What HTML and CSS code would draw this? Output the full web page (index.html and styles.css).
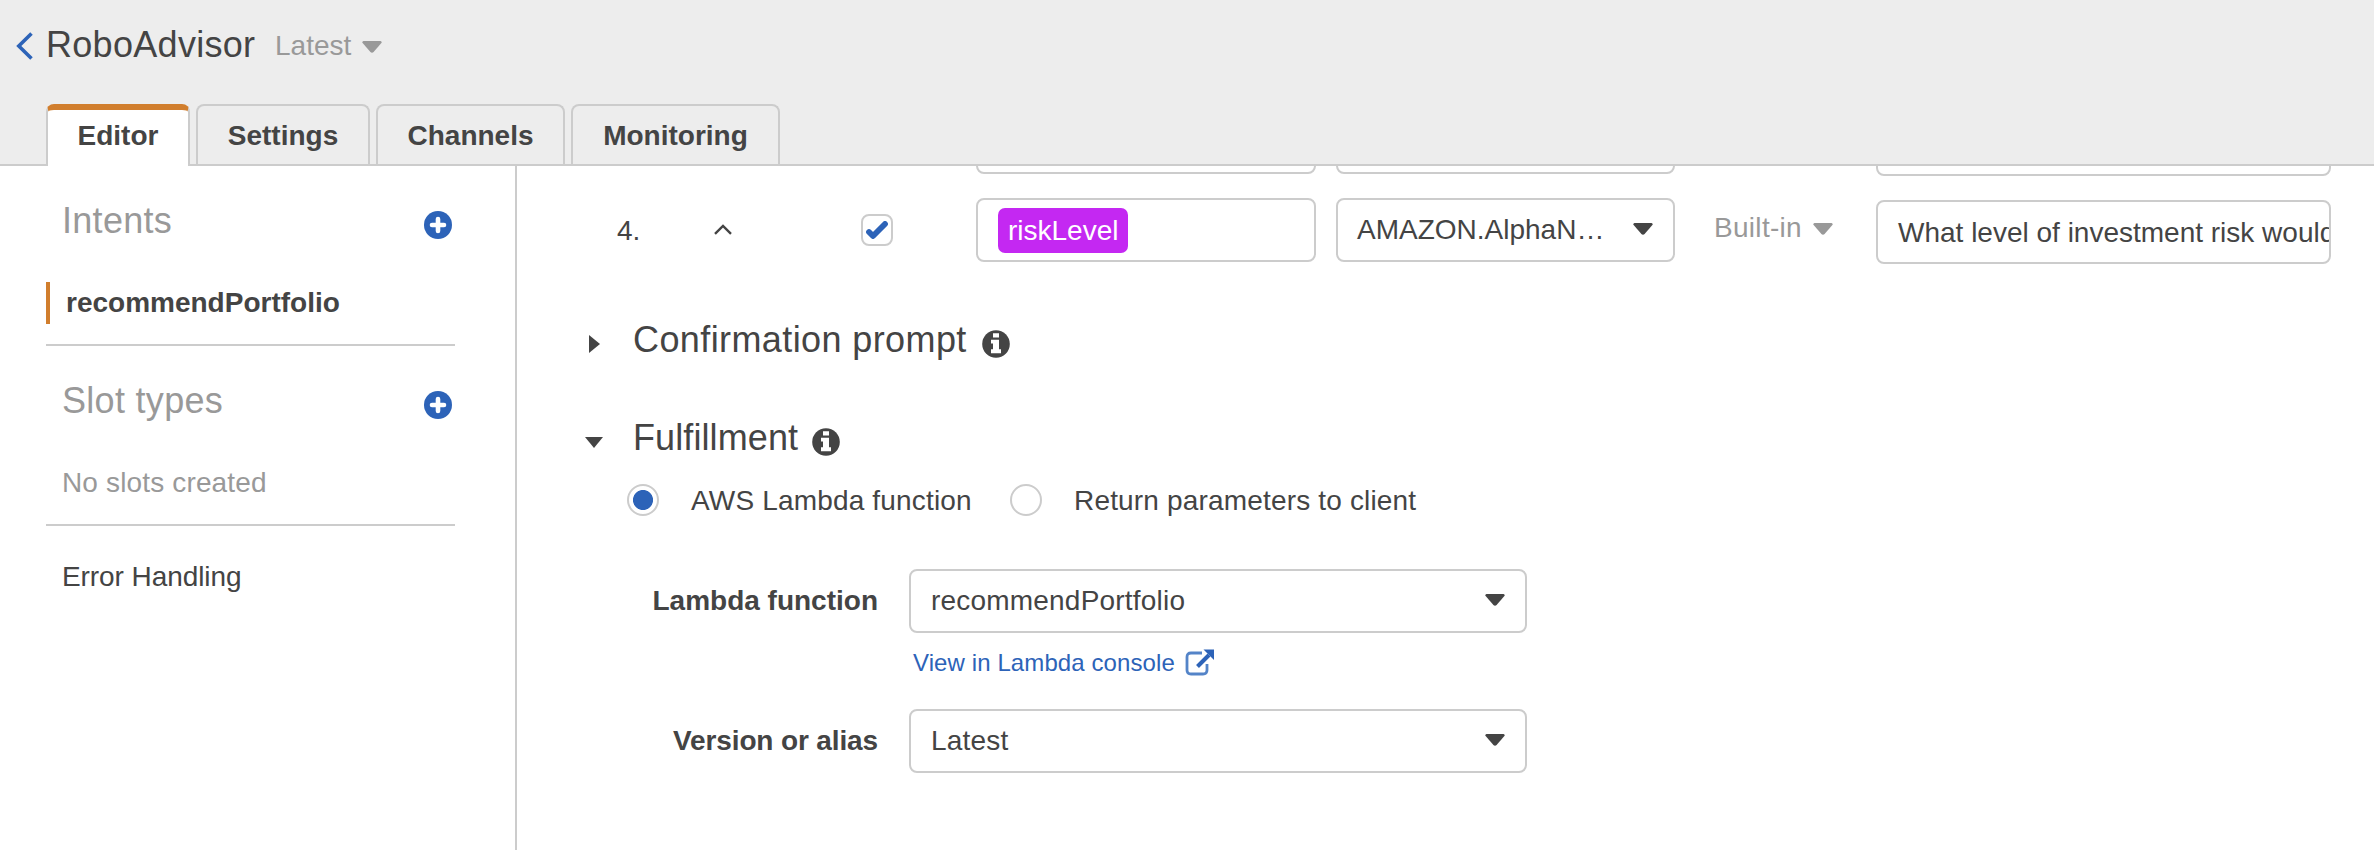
FILE: index.html
```html
<!DOCTYPE html>
<html lang="en">
<head>
<meta charset="utf-8">
<title>RoboAdvisor</title>
<link rel="stylesheet" href="styles.css">
</head>
<body>
<svg class="defs" width="0" height="0" aria-hidden="true">
  <symbol id="caret" viewBox="0 0 20 12"><path d="M1.5 0H18.5Q20 .2 19.6 1.8L11.6 11Q10 12.4 8.4 11L.4 1.8Q0 .2 1.5 0Z" fill="currentColor"/></symbol>
  <symbol id="plus" viewBox="0 0 28 28"><circle cx="14" cy="14" r="14" fill="#2d63b8"/><path d="M14 8V20M8 14H20" stroke="#fff" stroke-width="4.6" stroke-linecap="round"/></symbol>
  <symbol id="info" viewBox="0 0 28 28"><circle cx="14" cy="14" r="13.8" fill="#444"/><path d="M11 3.2H17V7.4H11ZM9 9.8H17V19.2H19V23.2H9V19.2H11V13.6H9Z" fill="#fff"/></symbol>
</svg>
<header class="header">
  <div class="title-bar">
    <svg class="back" viewBox="0 0 17 28"><path d="M15.5 1.5L2.8 14L15.5 26.5" fill="none" stroke="#2d63b8" stroke-width="3.6"/></svg>
    <h1 class="title">RoboAdvisor</h1>
    <span class="version">Latest</span>
    <svg class="caret muted"><use href="#caret"/></svg>
  </div>
  <nav class="tabs">
    <a class="tab tab-active">Editor</a>
    <a class="tab tab-settings">Settings</a>
    <a class="tab tab-channels">Channels</a>
    <a class="tab tab-monitoring">Monitoring</a>
  </nav>
</header>
<div class="layout">
  <aside class="sidebar">
    <div class="side-head"><h2>Intents</h2><svg class="plus"><use href="#plus"/></svg></div>
    <div class="intent">recommendPortfolio</div>
    <hr class="rule">
    <div class="side-head side-head-slots"><h2>Slot types</h2><svg class="plus"><use href="#plus"/></svg></div>
    <div class="empty">No slots created</div>
    <hr class="rule rule-slots">
    <div class="errors">Error Handling</div>
  </aside>
  <main class="main">
    <div class="slots">
      <div class="slot">
        <div class="field name"></div>
        <div class="field type"></div>
        <div class="field prompt"></div>
      </div>
      <div class="slot">
        <span class="num">4.</span>
        <svg class="up" viewBox="0 0 18 11"><path d="M1 9.8L9 1.9L17 9.8" fill="none" stroke="#444" stroke-width="2.4"/></svg>
        <span class="check"><svg viewBox="0 0 22 18"><path d="M3 11L7 15L19 3" fill="none" stroke="#2d63b8" stroke-width="5.8" stroke-linecap="round" stroke-linejoin="round"/></svg></span>
        <div class="field name"><span class="pill">riskLevel</span></div>
        <div class="field type"><span>AMAZON.AlphaN…</span><svg class="caret"><use href="#caret"/></svg></div>
        <div class="builtin"><span>Built-in</span><svg class="caret"><use href="#caret"/></svg></div>
        <div class="field prompt"><span>What level of investment risk would</span></div>
      </div>
    </div>
    <section class="section section-confirm">
      <span class="toggle"><svg width="11" height="18" viewBox="0 0 11 18"><path d="M0 0L11 9L0 18Z" fill="#444"/></svg></span>
      <h2 class="confirm-title">Confirmation prompt</h2><svg class="info"><use href="#info"/></svg>
    </section>
    <section class="section section-fulfill">
      <span class="toggle"><svg width="18" height="11" viewBox="0 0 18 11"><path d="M0 0H18L9 11Z" fill="#444"/></svg></span>
      <h2 class="fulfill-title">Fulfillment</h2><svg class="info"><use href="#info"/></svg>
    </section>
    <div class="radios">
      <span class="radio radio-on"></span><span class="radio-label first">AWS Lambda function</span>
      <span class="radio"></span><span class="radio-label">Return parameters to client</span>
    </div>
    <div class="form">
      <label>Lambda function</label>
      <div class="field select"><span>recommendPortfolio</span><svg class="caret"><use href="#caret"/></svg></div>
      <a class="link">View in Lambda console
        <svg class="ext" viewBox="0 0 30 28"><path d="M17 5H6Q2 5 2 9V22Q2 26 6 26H18Q22 26 22 22V16" fill="none" stroke="#5484c8" stroke-width="2.8"/><path d="M12.5 18.5L24 7" stroke="#2d63b8" stroke-width="4"/><path d="M18.5 1.5H29V12Z" fill="#2d63b8"/></svg></a>
      <label class="version-label">Version or alias</label>
      <div class="field select"><span>Latest</span><svg class="caret"><use href="#caret"/></svg></div>
    </div>
  </main>
</div>
</body>
</html>
```
FILE: styles.css
```css
* { box-sizing: border-box; }
html, body { margin: 0; height: 100%; overflow: hidden; }
body {
  display: flex;
  flex-direction: column;
  background: #fff;
  color: #444;
  font: 28px/32px "Liberation Sans", Arial, sans-serif;
}
h1, h2 { margin: 0; font-weight: 400; font-size: 36px; line-height: 40px; letter-spacing: .3px; white-space: nowrap; }
svg { display: block; flex: none; }
.defs { position: absolute; }
.caret { width: 20px; height: 12px; }
.muted { color: #999; }

.header {
  flex: none;
  height: 166px;
  display: flex;
  flex-direction: column;
  justify-content: space-between;
  background: #ededed;
  border-bottom: 2px solid #ccc;
}
.title-bar { display: flex; align-items: flex-start; padding: 24px 0 0 16px; }
.back { width: 17px; height: 28px; margin: 8px 13px 0 0; }
.title { width: 229px; margin-top: 1px; }
.version { margin-top: 6px; color: #999; width: 87px; }
.title-bar .caret { margin-top: 17px; }

.tabs { display: flex; align-items: flex-end; gap: 6px; padding-left: 46px; }
.tab {
  height: 60px;
  border: 2px solid #ccc;
  border-bottom: 0;
  border-radius: 8px 8px 0 0;
  text-align: center;
  font-weight: 700;
  line-height: 59px;
}
.tab-active {
  width: 144px;
  height: 62px;
  margin-bottom: -2px;
  background: #fff;
  border-top: 6px solid #d17e2d;
  line-height: 51px;
}
.tab-settings { width: 174px; }
.tab-channels { width: 189px; }
.tab-monitoring { width: 209px; }

.layout { flex: 1; min-height: 0; display: flex; }
.sidebar { flex: none; width: 517px; padding: 34px 60px 0 46px; border-right: 2px solid #ccc; }
.side-head { display: flex; justify-content: space-between; padding: 0 3px 0 16px; color: #999; }
.side-head h2 { margin-top: 1px; height: 39px; }
.plus { width: 28px; height: 28px; margin-top: 11px; }
.intent {
  height: 42px;
  margin-top: 42px;
  padding-left: 16px;
  border-left: 4px solid #d17e2d;
  font-weight: 700;
  line-height: 42px;
}
.rule { height: 2px; margin: 20px 0 0; border: 0; background: #ccc; }
.side-head-slots { margin-top: 34px; }
.empty { margin: 47px 0 0 16px; color: #999; letter-spacing: .15px; }
.rule-slots { margin-top: 25px; }
.errors { margin: 35px 0 0 16px; letter-spacing: -.08px; }

.main { flex: 1; min-width: 0; overflow: hidden; }
.field { height: 64px; display: flex; align-items: center; border: 2px solid #ccc; border-radius: 8px; background: #fff; }
.slots { display: flex; flex-direction: column; gap: 22px; margin-top: -56px; padding-left: 99px; }
.slot { height: 66px; display: grid; grid-template-columns: 97px 148px 115px 360px 377px 163px 455px; align-items: start; }
.name { grid-column: 4; width: 340px; padding-left: 20px; }
.type { grid-column: 5; width: 339px; padding: 0 20px 0 19px; justify-content: space-between; }
.type .caret { margin-top: -3px; }
.prompt { grid-column: 7; margin-top: 2px; padding: 2px 0 0 20px; overflow: hidden; white-space: nowrap; }
.num { margin: 17px 0 0 1px; }
.up { width: 18px; height: 11px; margin: 26px 0 0 1px; }
.check { display: grid; place-items: center; width: 32px; height: 32px; margin-top: 16px; border: 2px solid #ccc; border-radius: 8px; }
.check svg { width: 22px; height: 18px; }
.pill { height: 45px; margin-top: 1px; padding: 0 10px; border-radius: 7px; background: #c428f2; color: #fff; line-height: 46px; }
.builtin { display: flex; justify-content: space-between; width: 119px; margin: 14px 0 0 1px; color: #999; letter-spacing: .3px; }
.builtin .caret { margin-top: 11px; }

.section { display: flex; align-items: flex-start; }
.section-confirm { margin-top: 56px; }
.section-fulfill { margin-top: 58px; }
.toggle { display: grid; place-items: center; width: 20px; height: 24px; margin: 12px 28px 0 67px; }
.section h2 { margin-left: 1px; }
.confirm-title { width: 334px; letter-spacing: .4px; }
.fulfill-title { width: 164px; letter-spacing: .1px; }
.info { width: 28px; height: 28px; margin: 10px 0 0 15px; }
.radios { display: flex; align-items: center; height: 32px; margin-top: 26px; padding-left: 110px; }
.radio { width: 32px; height: 32px; border: 2px solid #ccc; border-radius: 50%; }
.radio-on { background: radial-gradient(circle, #2d63b8 9.6px, #fff 10.4px); }
.radio-label { margin: 2px 0 0 32px; letter-spacing: .17px; }
.first { width: 319px; }
.form { display: grid; grid-template-columns: 361px 618px; column-gap: 31px; margin-top: 53px; }
.form label { margin-top: 16px; text-align: right; font-weight: 700; }
.form .version-label { letter-spacing: -.13px; }
.select { justify-content: space-between; padding: 0 20px; letter-spacing: .2px; }
.select .caret { margin-top: -3px; }
.link { grid-column: 2; display: flex; height: 76px; padding: 14px 0 0 4px; color: #2d63b8; font-size: 24px; letter-spacing: .1px; }
.ext { width: 30px; height: 28px; margin: 1px 0 0 10px; }
```
